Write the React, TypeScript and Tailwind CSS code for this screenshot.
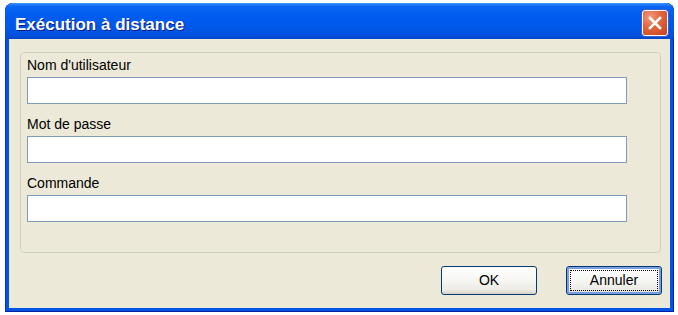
import React from "react";

function CloseButton() {
  return (
    <div className="flex h-[26px] w-[26px] items-center justify-center rounded-[3px] border border-white bg-[radial-gradient(circle_at_30%_25%,#f09a7c_0%,#e0643f_45%,#c7421d_100%)] shadow-[0_0_0_1px_#3a5fd0]">
      <svg width="16" height="16" viewBox="0 0 16 16">
        <path d="M3 3 L13 13 M13 3 L3 13" stroke="white" strokeWidth="2.6" strokeLinecap="square" />
      </svg>
    </div>
  );
}

function Field({ label }: { label: string }) {
  return (
    <div className="flex flex-col">
      <label className="h-[16px] text-[14px] leading-[16px] text-black">{label}</label>
      <input
        type="text"
        className="mt-[4px] h-[27px] w-[600px] border border-[#7f9db9] bg-white outline-none"
      />
    </div>
  );
}

export default function App() {
  const fields = ["Nom d'utilisateur", "Mot de passe", "Commande"];
  return (
    <div className="h-[315px] w-[678px] bg-white pl-[5px] pr-[4px] pt-[3px] font-['Liberation_Sans',Arial,sans-serif]">
      <div className="flex h-[309px] flex-col overflow-hidden rounded-t-[8px] bg-[#0055e5] shadow-[inset_1px_0_0_#0831d9,inset_-1px_0_0_#001ea0,inset_0_-1px_0_#001ea0]">
        {/* title bar */}
        <div className="flex h-[36px] items-start justify-between bg-[linear-gradient(180deg,#3d95ff_0%,#0a66f2_10%,#005cf0_35%,#0058e8_70%,#0050dd_90%,#0046cc_100%)] pl-[10px] pr-[6px]">
          <span className="pt-[13px] text-[17px] font-bold leading-[18px] text-white [text-shadow:1px_1px_0_#0a1883]">
            Exécution à distance
          </span>
          <div className="pt-[7px]">
            <CloseButton />
          </div>
        </div>

        {/* body */}
        <div className="mx-[4px] mb-[4px] flex flex-1 flex-col bg-[#ece9d8]">
          <div className="ml-[11px] mr-[9px] mt-[13px] h-[201px] rounded-[4px] border border-[#d0d0bf] pl-[6px] pt-[4px]">
            <div className="flex flex-col gap-[12px]">
              {fields.map((f) => (
                <Field key={f} label={f} />
              ))}
            </div>
          </div>

          <div className="mt-[13px] flex justify-end gap-[29px] pr-[8px]">
            <button className="h-[29px] w-[96px] rounded-[3px] border border-[#003c74] bg-[linear-gradient(180deg,#ffffff_0%,#f7f7f4_45%,#ecebe5_85%,#d8d2c6_100%)] text-[14px] text-black">
              OK
            </button>
            <button className="h-[29px] w-[96px] rounded-[3px] border border-[#003c74] bg-[linear-gradient(180deg,#ffffff_0%,#f7f7f4_45%,#ecebe5_85%,#d8d2c6_100%)] text-[14px] text-black shadow-[inset_0_0_0_2px_#7d9de3] outline-1 outline-offset-[-5px] outline-dotted outline-black">
              Annuler
            </button>
          </div>
        </div>
      </div>
    </div>
  );
}
